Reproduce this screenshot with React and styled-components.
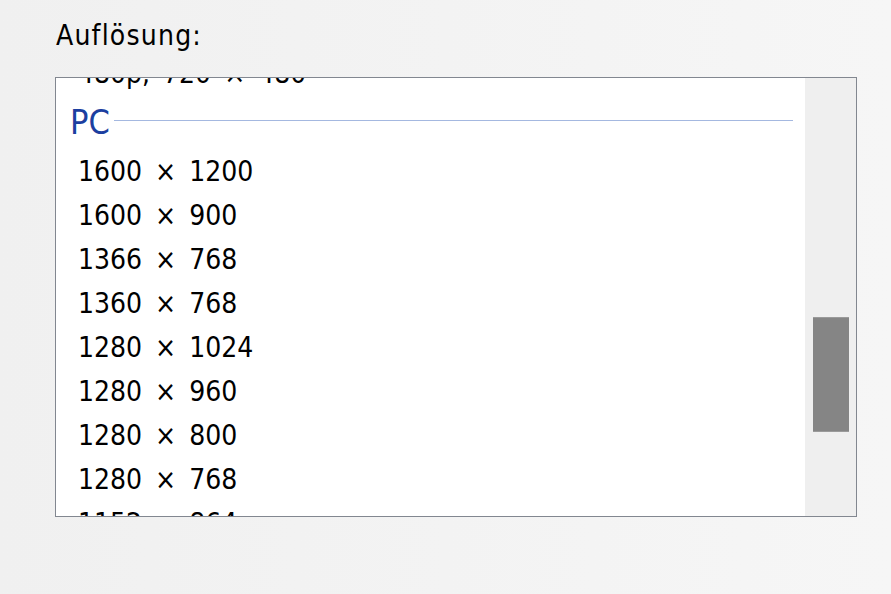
import React from "react";
import styled, { createGlobalStyle } from "styled-components";

const Global = createGlobalStyle`
  html, body { margin: 0; padding: 0; }
  body {
    width: 891px; height: 594px; overflow: hidden;
    background: linear-gradient(to right, #f0f0f0 0%, #f3f3f3 50%, #f6f6f6 100%);
    font-family: "DejaVu Sans Condensed", "DejaVu Sans", sans-serif;
  }
`;

const Page = styled.div`
  padding: 19px 0 0 55px;
  display: flex;
  flex-direction: column;
`;

const Label = styled.div`
  font-size: 28px;
  line-height: 34px;
  letter-spacing: 1.2px;
  color: #000;
  margin-bottom: 24px;
  padding-left: 1px;
`;

const ListBox = styled.div`
  width: 800px;
  height: 438px;
  border: 1px solid #828790;
  background: #fff;
  display: flex;
  overflow: hidden;
`;

const Viewport = styled.div`
  flex: 1;
  overflow: hidden;
  padding-right: 12px;
`;

const Content = styled.div`
  margin-top: -26px;
`;

const Item = styled.div`
  height: 44px;
  line-height: 44px;
  font-size: 28px;
  word-spacing: 5px;
  color: #000;
  padding-left: 22px;
  white-space: nowrap;
`;

const GroupHeader = styled.div`
  display: flex;
  align-items: center;
  height: 38px;
  line-height: 38px;
  margin: 7px 0 9px;
  padding-left: 14px;
  color: #1c3fa0;
  font-size: 34px;
`;

const GroupLine = styled.div`
  flex: 1;
  height: 1px;
  background: #a4b8e0;
  margin-left: 4px;
  margin-top: -4px;
`;

const Track = styled.div`
  width: 51px;
  background: #efefef;
  display: flex;
  justify-content: center;
`;

const Thumb = styled.div`
  width: 36px;
  height: 115px;
  margin-top: 239px;
  background: #858585;
  border-top: 1px solid #9a9a9a;
  border-bottom: 1px solid #9a9a9a;
  box-sizing: border-box;
`;

const before = ["480p, 720 × 480"];
const pc = [
  "1600 × 1200",
  "1600 × 900",
  "1366 × 768",
  "1360 × 768",
  "1280 × 1024",
  "1280 × 960",
  "1280 × 800",
  "1280 × 768",
  "1152 × 864",
];

export default function App() {
  return (
    <>
      <Global />
      <Page>
        <Label>Auflösung:</Label>
        <ListBox>
          <Viewport>
            <Content>
              {before.map((t) => (
                <Item key={t}>{t}</Item>
              ))}
              <GroupHeader>
                PC
                <GroupLine />
              </GroupHeader>
              {pc.map((t) => (
                <Item key={t}>{t}</Item>
              ))}
            </Content>
          </Viewport>
          <Track>
            <Thumb />
          </Track>
        </ListBox>
      </Page>
    </>
  );
}
